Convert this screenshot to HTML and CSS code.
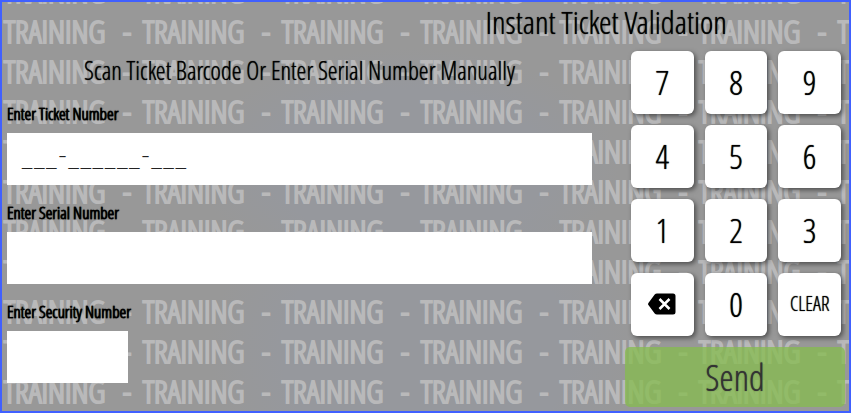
FILE: index.html
```html
<!DOCTYPE html>
<html lang="en">
<head>
    <meta charset="utf-8">
    <meta name="viewport" content="width=device-width, initial-scale=1">
    <title>Instant Ticket Validation</title>
    <link rel="stylesheet" href="styles.css">
</head>

<body>
    <div class="page">
        <!-- filled by training.js -->
        <div class="watermark" id="watermark" aria-hidden="true"></div>

        <form class="validation" onsubmit="return false">
            <h1 class="title">Instant Ticket Validation</h1>

            <div class="fields">
                <p class="instruction">Scan Ticket Barcode Or Enter Serial Number Manually</p>

                <label for="ticketNumber">Enter Ticket Number</label>
                <input id="ticketNumber" class="field" type="text" value="___-______-___">

                <label for="serialNumber">Enter Serial Number</label>
                <input id="serialNumber" class="field" type="text">

                <label for="securityNumber">Enter Security Number</label>
                <input id="securityNumber" class="field field_short" type="text">
            </div>

            <div class="controls">
                <div class="keypad">
                    <button type="button" class="key">7</button>
                    <button type="button" class="key">8</button>
                    <button type="button" class="key">9</button>
                    <button type="button" class="key">4</button>
                    <button type="button" class="key">5</button>
                    <button type="button" class="key">6</button>
                    <button type="button" class="key">1</button>
                    <button type="button" class="key">2</button>
                    <button type="button" class="key">3</button>
                    <button type="button" class="key" aria-label="Backspace">
                        <svg class="key_icon" viewBox="0 0 28 22">
                            <path d="M9 .5H25a2.500 2.500 0 0 1 2.500 2.500V19a2.500 2.500 0 0 1-2.500 2.500H9a3 3 0 0 1-2.300-1.100L.6 12.300a2 2 0 0 1 0-2.600L6.700 1.600A3 3 0 0 1 9 .5z"/>
                            <path class="key_cross" d="M11.500 6l10 10M21.500 6l-10 10"/>
                        </svg>
                    </button>
                    <button type="button" class="key">0</button>
                    <button type="button" class="key key_clear">CLEAR</button>
                </div>
                <button type="submit" class="send">Send</button>
            </div>
        </form>
    </div>
    <script src="training.js"></script>
</body>
</html>
```
FILE: styles.css
```css
*{
    box-sizing: border-box;
}
body{
    margin: 0;
    font-family: "Open Sans Condensed Light", "Roboto Condensed", "Liberation Sans", sans-serif;
    color: #000;
}
.page{
    position: relative;
    min-height: 100vh;
    border: 2px solid #4060ff;
    overflow: hidden;
    background-color: #989898;
    background-image:
        radial-gradient(ellipse at 48% 40%, #96989d 0, #96989d 22%, transparent 34%),
        radial-gradient(ellipse at 50% 85%, #96989d 0, #96989d 24%, transparent 36%);
}

/* repeated word behind the form */
.watermark{
    position: absolute;
    top: -31px;
    left: 2px;
}
.watermark_row{
    display: flex;
    height: 40px;
    line-height: 40px;
    font-size: 32px;
    font-weight: bold;
    color: #b9b9ba;
    -webkit-text-stroke: 1px #b9b9ba;
}
.watermark_cell{
    display: flex;
    flex: none;
    width: 139px;
    justify-content: space-between;
    padding-right: 12px;
}

.validation{
    position: relative;
    display: grid;
    grid-template-columns: 1fr 220px;
    column-gap: 33px;
    padding: 0 4px 4px 5px;
}
.title{
    grid-column: 1 / 3;
    margin: 0 0 0 43%;
    text-align: center;
    font-size: 32px;
    font-weight: normal;
    line-height: 40px;
    text-shadow: 0 0 1px #000;
}
.fields{
    display: flex;
    flex-direction: column;
}
.instruction{
    margin: 8px 0 16px;
    text-align: center;
    font-size: 25px;
    line-height: 40px;
    text-shadow: 0 0 1px #000;
}
label{
    height: 27px;
    font-size: 17px;
    font-weight: bold;
    line-height: 16px;
    text-shadow: 0 0 1px #000;
}
.field{
    width: 100%;
    height: 52px;
    margin-bottom: 20px;
    padding: 0 14px 10px;
    border: 0;
    background: #fff;
    font-family: Lato, sans-serif;
    font-size: 27px;
    font-weight: 300;
    color: #222;
}
.field_short{
    width: 121px;
    margin-bottom: 0;
}

.controls{
    display: flex;
    flex-direction: column;
    gap: 11px;
    padding-top: 9px;
}
.keypad{
    display: grid;
    grid-template-columns: repeat(3, 1fr);
    gap: 11px;
    padding: 0 4px 0 6px;
}
.key{
    display: flex;
    align-items: center;
    justify-content: center;
    height: 63px;
    padding: 0 0 2px;
    border: 0;
    border-radius: 6px;
    background: #fff;
    box-shadow: 2px 2px 5px rgba(0, 0, 0, .5);
    font-family: inherit;
    font-size: 34px;
    color: #000;
    text-shadow: 0 0 1px #000;
}
.key_clear{
    font-size: 20px;
}
.key_icon{
    width: 28px;
    height: 22px;
}
.key_cross{
    fill: none;
    stroke: #fff;
    stroke-width: 2.500;
}
.send{
    height: 60px;
    padding: 0;
    border: 0;
    border-radius: 5px;
    background: rgba(134, 188, 77, .75);
    font-family: inherit;
    font-size: 36px;
    color: #333;
    text-shadow: 0 0 1px #333;
}
```
FILE: training.js
```js
// Fill the background with rows of the word TRAINING
var watermark = document.getElementById("watermark");
for (var i = 0; i < 11; i++) {
    var row = document.createElement("div");
    row.className = "watermark_row";
    for (var j = 0; j < 7; j++) {
        row.innerHTML += '<div class="watermark_cell"><span>TRAINING</span><span>-</span></div>';
    }
    watermark.appendChild(row);
}
```
